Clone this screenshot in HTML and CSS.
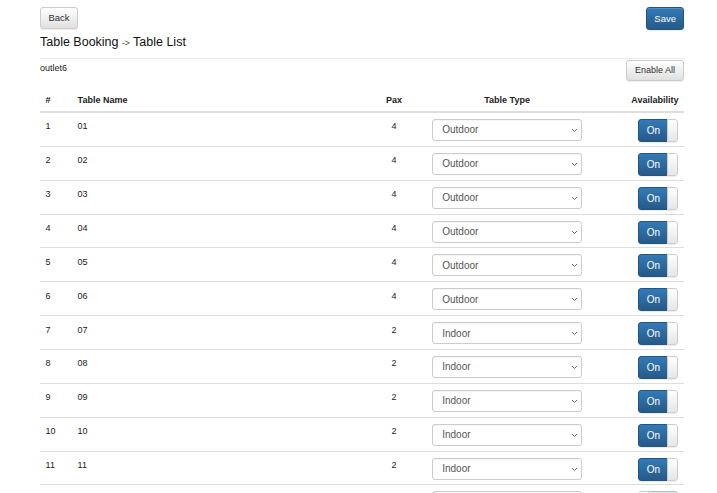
FILE: index.html
```html
<!DOCTYPE html>
<html>
<head>
<meta charset="utf-8">
<link rel="stylesheet" href="styles.css">
</head>
<body>
<div class="page">
  <div class="topbar">
    <button class="btn btn-default btn-back">Back</button>
    <button class="btn btn-primary btn-save">Save</button>
  </div>
  <h4 class="title">Table Booking <small>-&gt;</small> Table List</h4>
  <div class="subbar">
    <div class="outlet">outlet6</div>
    <button class="btn btn-default btn-enable">Enable All</button>
  </div>
  <table class="table">
    <colgroup>
      <col class="c-num"><col class="c-name"><col class="c-pax"><col class="c-type"><col class="c-avail">
    </colgroup>
    <thead>
      <tr><th>#</th><th>Table Name</th><th class="center">Pax</th><th class="center">Table Type</th><th class="right">Availability</th></tr>
    </thead>
    <tbody>
      <tr><td>1</td><td>01</td><td class="center">4</td><td class="center ctl"><div class="sel"><select><option>Outdoor</option><option>Indoor</option></select><svg class="chev" width="7" height="5" viewBox="0 0 7 5"><path d="M1 1 L3.5 3.5 L6 1" fill="none" stroke="#666" stroke-width="1"/></svg></div></td><td class="right ctl"><span class="toggle on"><span class="tg-on">On</span><span class="tg-handle"></span></span></td></tr>
      <tr><td>2</td><td>02</td><td class="center">4</td><td class="center ctl"><div class="sel"><select><option>Outdoor</option><option>Indoor</option></select><svg class="chev" width="7" height="5" viewBox="0 0 7 5"><path d="M1 1 L3.5 3.5 L6 1" fill="none" stroke="#666" stroke-width="1"/></svg></div></td><td class="right ctl"><span class="toggle on"><span class="tg-on">On</span><span class="tg-handle"></span></span></td></tr>
      <tr><td>3</td><td>03</td><td class="center">4</td><td class="center ctl"><div class="sel"><select><option>Outdoor</option><option>Indoor</option></select><svg class="chev" width="7" height="5" viewBox="0 0 7 5"><path d="M1 1 L3.5 3.5 L6 1" fill="none" stroke="#666" stroke-width="1"/></svg></div></td><td class="right ctl"><span class="toggle on"><span class="tg-on">On</span><span class="tg-handle"></span></span></td></tr>
      <tr><td>4</td><td>04</td><td class="center">4</td><td class="center ctl"><div class="sel"><select><option>Outdoor</option><option>Indoor</option></select><svg class="chev" width="7" height="5" viewBox="0 0 7 5"><path d="M1 1 L3.5 3.5 L6 1" fill="none" stroke="#666" stroke-width="1"/></svg></div></td><td class="right ctl"><span class="toggle on"><span class="tg-on">On</span><span class="tg-handle"></span></span></td></tr>
      <tr><td>5</td><td>05</td><td class="center">4</td><td class="center ctl"><div class="sel"><select><option>Outdoor</option><option>Indoor</option></select><svg class="chev" width="7" height="5" viewBox="0 0 7 5"><path d="M1 1 L3.5 3.5 L6 1" fill="none" stroke="#666" stroke-width="1"/></svg></div></td><td class="right ctl"><span class="toggle on"><span class="tg-on">On</span><span class="tg-handle"></span></span></td></tr>
      <tr><td>6</td><td>06</td><td class="center">4</td><td class="center ctl"><div class="sel"><select><option>Outdoor</option><option>Indoor</option></select><svg class="chev" width="7" height="5" viewBox="0 0 7 5"><path d="M1 1 L3.5 3.5 L6 1" fill="none" stroke="#666" stroke-width="1"/></svg></div></td><td class="right ctl"><span class="toggle on"><span class="tg-on">On</span><span class="tg-handle"></span></span></td></tr>
      <tr><td>7</td><td>07</td><td class="center">2</td><td class="center ctl"><div class="sel"><select><option>Indoor</option><option>Outdoor</option></select><svg class="chev" width="7" height="5" viewBox="0 0 7 5"><path d="M1 1 L3.5 3.5 L6 1" fill="none" stroke="#666" stroke-width="1"/></svg></div></td><td class="right ctl"><span class="toggle on"><span class="tg-on">On</span><span class="tg-handle"></span></span></td></tr>
      <tr><td>8</td><td>08</td><td class="center">2</td><td class="center ctl"><div class="sel"><select><option>Indoor</option><option>Outdoor</option></select><svg class="chev" width="7" height="5" viewBox="0 0 7 5"><path d="M1 1 L3.5 3.5 L6 1" fill="none" stroke="#666" stroke-width="1"/></svg></div></td><td class="right ctl"><span class="toggle on"><span class="tg-on">On</span><span class="tg-handle"></span></span></td></tr>
      <tr><td>9</td><td>09</td><td class="center">2</td><td class="center ctl"><div class="sel"><select><option>Indoor</option><option>Outdoor</option></select><svg class="chev" width="7" height="5" viewBox="0 0 7 5"><path d="M1 1 L3.5 3.5 L6 1" fill="none" stroke="#666" stroke-width="1"/></svg></div></td><td class="right ctl"><span class="toggle on"><span class="tg-on">On</span><span class="tg-handle"></span></span></td></tr>
      <tr><td>10</td><td>10</td><td class="center">2</td><td class="center ctl"><div class="sel"><select><option>Indoor</option><option>Outdoor</option></select><svg class="chev" width="7" height="5" viewBox="0 0 7 5"><path d="M1 1 L3.5 3.5 L6 1" fill="none" stroke="#666" stroke-width="1"/></svg></div></td><td class="right ctl"><span class="toggle on"><span class="tg-on">On</span><span class="tg-handle"></span></span></td></tr>
      <tr><td>11</td><td>11</td><td class="center">2</td><td class="center ctl"><div class="sel"><select><option>Indoor</option><option>Outdoor</option></select><svg class="chev" width="7" height="5" viewBox="0 0 7 5"><path d="M1 1 L3.5 3.5 L6 1" fill="none" stroke="#666" stroke-width="1"/></svg></div></td><td class="right ctl"><span class="toggle on"><span class="tg-on">On</span><span class="tg-handle"></span></span></td></tr>
      <tr><td>12</td><td>12</td><td class="center">2</td><td class="center ctl"><div class="sel"><select><option>Indoor</option><option>Outdoor</option></select><svg class="chev" width="7" height="5" viewBox="0 0 7 5"><path d="M1 1 L3.5 3.5 L6 1" fill="none" stroke="#666" stroke-width="1"/></svg></div></td><td class="right ctl"><span class="toggle off"><span class="tg-handle"></span><span class="tg-off">Off</span></span></td></tr>
    </tbody>
  </table>
</div>
</body>
</html>
```
FILE: styles.css
```css
html, body {
  margin: 0;
  padding: 0;
  overflow: hidden;
  background: #fff;
}
body {
  font-family: "Liberation Sans", Arial, Helvetica, sans-serif;
  color: #222;
}
.page {
  padding: 7px 33px 0 40px;
}
.topbar {
  display: flex;
  justify-content: space-between;
  align-items: flex-start;
  height: 23px;
}
.btn {
  font-family: inherit;
  font-size: 9.5px;
  line-height: 1;
  border-radius: 3px;
  border: 1px solid #ccc;
  cursor: pointer;
  margin: 0;
}
.btn-default {
  color: #333;
  background: linear-gradient(#ffffff, #e0e0e0);
  border-color: #ccc;
  box-shadow: inset 0 1px 0 rgba(255,255,255,.15), 0 1px 1px rgba(0,0,0,.075);
}
.btn-primary {
  color: #fff;
  background: linear-gradient(#337ab7, #265a88);
  border-color: #245580;
  box-shadow: inset 0 1px 0 rgba(255,255,255,.15), 0 1px 1px rgba(0,0,0,.075);
}
.btn-back {
  height: 22px;
  padding: 0 7.5px;
}
.btn-save {
  height: 23px;
  padding: 0 7px;
}
.btn-enable {
  height: 21px;
  padding: 0 8px;
  font-size: 9px;
}
.title {
  margin: 5.4px 0 6.6px;
  font-size: 12.5px;
  line-height: 15px;
  font-weight: normal;
  color: #111;
}
.title small {
  font-size: 8.5px;
  color: #444;
}
.subbar {
  border-top: 1px solid #eee;
  padding-top: 1px;
  display: flex;
  justify-content: space-between;
  align-items: flex-start;
}
.outlet {
  margin-top: 3px;
  font-size: 9px;
  line-height: 11px;
}
.table {
  margin-top: 5.8px;
  width: 100%;
  border-collapse: collapse;
  table-layout: fixed;
  font-size: 9px;
  line-height: 13px;
}
.c-num { width: 32px; }
.c-pax { width: 65px; }
.c-type { width: 161px; }
.c-avail { width: 96.4px; }
.table th {
  text-align: left;
  font-weight: bold;
  padding: 7.4px 5.6px 3.8px;
  border-bottom: 2px solid #ddd;
  color: #222;
}
.table td {
  padding: 7.5px 5.6px 3.86px;
  border-top: 1px solid #ddd;
  vertical-align: top;
}
.table td.ctl {
  padding-top: 6px;
}
.table .center { text-align: center; }
.table .right { text-align: right; }
.sel {
  position: relative;
  display: block;
  width: 150px;
  height: 22px;
  margin: 0 auto;
}
.sel select {
  -webkit-appearance: none;
  appearance: none;
  display: block;
  width: 150px;
  height: 22px;
  padding: 0 9px;
  border: 1px solid #ccc;
  border-radius: 3px;
  background: #fff;
  font-family: inherit;
  font-size: 10px;
  color: #555;
  box-shadow: inset 0 1px 1px rgba(0,0,0,.04);
  margin: 0;
}
.chev {
  position: absolute;
  right: 4px;
  top: 9px;
  pointer-events: none;
}
.toggle {
  display: inline-flex;
  width: 40px;
  height: 23px;
  border-radius: 3px;
  overflow: hidden;
  vertical-align: top;
  box-shadow: 0 1px 1px rgba(0,0,0,.08);
}
.tg-on {
  flex: 1;
  display: flex;
  align-items: center;
  justify-content: center;
  color: #fff;
  font-size: 10px;
  background: linear-gradient(#337ab7, #265a88);
  border: 1px solid #245580;
  border-right: none;
  border-radius: 3px 0 0 3px;
}
.tg-off {
  flex: 1;
  display: flex;
  align-items: center;
  justify-content: center;
  color: #333;
  font-size: 10px;
  background: linear-gradient(#e8e8e8, #d0d0d0);
  border: 1px solid #bbb;
  border-left: none;
  border-radius: 0 3px 3px 0;
}
.tg-handle {
  width: 9px;
  background: linear-gradient(#ffffff, #e6e6e6);
  border: 1px solid #ccc;
}
.on .tg-handle {
  border-radius: 0 3px 3px 0;
}
.off .tg-handle {
  border-radius: 3px 0 0 3px;
}
```
